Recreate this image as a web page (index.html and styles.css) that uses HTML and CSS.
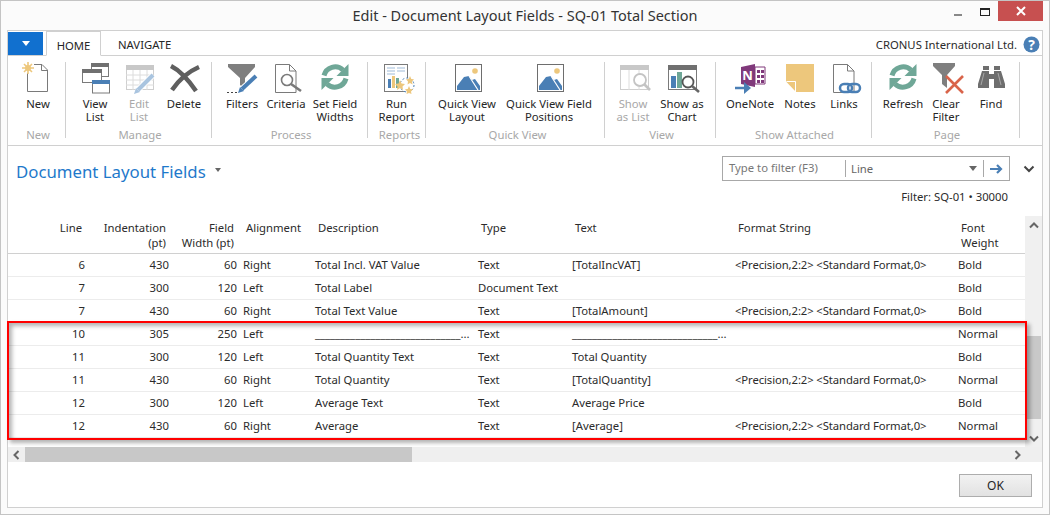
FILE: index.html
```html
<!DOCTYPE html>
<html lang="en">
<head>
<meta charset="UTF-8" />
<title>Edit - Document Layout Fields - SQ-01 Total Section</title>
<link rel="stylesheet" href="styles.css">
</head>
<body>

<svg class="defs" width="0" height="0">
  <symbol id="i-refresh" viewBox="0 0 32 32">
    <path d="M5 13.5A11.5 11.5 0 0 1 24 8" fill="none" stroke="#6fa797" stroke-width="5"/>
    <path d="M29.5 2V14H17.5z" fill="#6fa797"/>
    <path d="M27 16.5A11.5 11.5 0 0 1 8 22" fill="none" stroke="#6fa797" stroke-width="5"/>
    <path d="M2.5 28V16H14.5z" fill="#6fa797"/>
  </symbol>
  <symbol id="i-picture" viewBox="0 0 32 32">
    <rect x="4.5" y="2.5" width="26" height="27" fill="#fff" stroke="#6e6e6e"/>
    <circle cx="24" cy="9" r="2.8" fill="#edc77c"/>
    <path d="M6 28V24L13 15L18 14L21 18L24 17L29 24V28z" fill="#4a7fb5"/>
    <path d="M18 14L27 28" fill="none" stroke="#fff" stroke-width="1.2"/>
  </symbol>
</svg>

<div class="window">
  <div class="titlebar">
    <div></div>
    <div class="title">Edit - Document Layout Fields - SQ-01 Total Section</div>
    <div class="winbtns">
      <span class="win-min"></span>
      <span class="win-max"></span>
      <span class="win-close">
        <svg width="12" height="12" viewBox="0 0 12 12"><path d="M2 2L10 10M10 2L2 10" stroke="#fff" stroke-width="2"/></svg>
      </span>
    </div>
  </div>

  <div class="frame">
    <div class="tabs">
      <div class="filebtn"><span class="filearrow"></span></div>
      <div class="tab active">HOME</div>
      <div class="tab">NAVIGATE</div>
      <div class="company">CRONUS International Ltd.</div>
      <svg class="help" width="17" height="17" viewBox="0 0 17 17">
        <circle cx="8.5" cy="8.5" r="8" fill="#4a7fb5"/>
        <text x="8.5" y="13.5" text-anchor="middle" class="helpmark">?</text>
      </svg>
    </div>

    <div class="ribbon">
      <div class="group g-new">
        <div class="btns">
          <div class="rb w52">
            <svg class="ico" width="32" height="32" viewBox="0 0 32 32">
              <path d="M5.5 11V29.5H25.5V8L20 2.5H12" fill="#fff" stroke="#7a7a7a"/>
              <path d="M19.5 2.5V8.5H25.5" fill="none" stroke="#7a7a7a"/>
              <path d="M6 0V12M0 6H12M2 2L10 10M10 2L2 10" stroke="#edc77c" stroke-width="1.6"/>
              <circle cx="6" cy="6" r="3" fill="#edc77c"/>
            </svg>
            <span>New</span>
          </div>
        </div>
        <div class="glabel">New</div>
      </div>

      <div class="group g-manage">
        <div class="btns">
          <div class="rb w44">
            <svg class="ico" width="32" height="32" viewBox="0 0 32 32">
              <rect x="12.5" y="1.5" width="17" height="13" fill="#fff" stroke="#7a7a7a"/>
              <rect x="12" y="1" width="18" height="4" fill="#707070"/>
              <rect x="3.5" y="7.5" width="19" height="13" fill="#fff" stroke="#7a7a7a"/>
              <rect x="3" y="7" width="20" height="4" fill="#707070"/>
              <rect x="13.5" y="18.5" width="17" height="12.5" fill="#fff" stroke="#7a7a7a"/>
              <rect x="13" y="18" width="18" height="4" fill="#4a7fb5"/>
            </svg>
            <span>View<br>List</span>
          </div>
          <div class="rb w44 off">
            <svg class="ico" width="32" height="32" viewBox="0 0 32 32">
              <rect x="3.5" y="3.5" width="27" height="24" fill="#fff" stroke="#cfcfcf"/>
              <rect x="3" y="3" width="28" height="5" fill="#c8c8c8"/>
              <path d="M3 13H31M3 18H31M3 23H31M10 8V28M17 8V28M24 8V28" stroke="#dcdcdc"/>
              <path d="M14 29L30 13" stroke="#fff" stroke-width="6"/>
              <path d="M15 28L30 13" stroke="#a9c4df" stroke-width="4"/>
              <path d="M11 32L13 26L17 30z" fill="#a9c4df"/>
            </svg>
            <span>Edit<br>List</span>
          </div>
          <div class="rb w46">
            <svg class="ico" width="32" height="32" viewBox="0 0 32 32">
              <path d="M3 4Q15 10 28 29" fill="none" stroke="#5f5f5f" stroke-width="4.5"/>
              <path d="M31 5Q15 12 4 28" fill="none" stroke="#5f5f5f" stroke-width="4.5"/>
            </svg>
            <span>Delete</span>
          </div>
        </div>
        <div class="glabel">Manage</div>
      </div>

      <div class="group g-process">
        <div class="btns">
          <div class="rb w44">
            <svg class="ico" width="32" height="32" viewBox="0 0 32 32">
              <path d="M2 2H29V5L19 16V27L14 23V16L2 5z" fill="#7f7f7f"/>
              <path d="M15 28L30 14" stroke="#fff" stroke-width="6"/>
              <path d="M16 27L30 14" stroke="#4a7fb5" stroke-width="4"/>
              <path d="M12 31L14 25L18 29z" fill="#4a7fb5"/>
              <path d="M1 30.5H12" stroke="#444" stroke-dasharray="2 2"/>
            </svg>
            <span>Filters</span>
          </div>
          <div class="rb w44">
            <svg class="ico" width="32" height="32" viewBox="0 0 32 32">
              <path d="M5.5 2.5V30.5H26V9L19.5 2.5z" fill="#fff" stroke="#7a7a7a"/>
              <path d="M19.5 2.5V9H26" fill="none" stroke="#7a7a7a"/>
              <circle cx="17" cy="18" r="5.5" fill="#fff" stroke="#7a7a7a" stroke-width="1.6"/>
              <path d="M21 22L31 29" stroke="#7a7a7a" stroke-width="2.6"/>
            </svg>
            <span>Criteria</span>
          </div>
          <div class="rb w54">
            <svg class="ico" width="32" height="32"><use href="#i-refresh"/></svg>
            <span>Set Field<br>Widths</span>
          </div>
        </div>
        <div class="glabel">Process</div>
      </div>

      <div class="group g-reports">
        <div class="btns">
          <div class="rb w57">
            <svg class="ico" width="32" height="32" viewBox="0 0 32 32">
              <rect x="3.5" y="2.5" width="23" height="27" fill="#fff" stroke="#7a7a7a"/>
              <path d="M6 6H14M16 6H24M6 9H14M16 9H24M6 12H14" stroke="#9fbbd8"/>
              <rect x="7" y="17" width="3" height="9" fill="#4a7fb5"/>
              <rect x="11" y="14" width="3" height="12" fill="#edc77c"/>
              <rect x="15" y="16" width="3" height="10" fill="#6fa797"/>
              <circle cx="26" cy="23" r="7" fill="#fff" stroke="#4a7fb5" stroke-dasharray="2 2"/>
              <path d="M19 18L20.500 21.500L24 22L21.500 24.500L22 28L19 26L16 28L16.500 24.500L14 22L17.500 21.500z" fill="#edc77c"/>
              <path d="M29 14L30.300 17L33 17.300L31 19.500L31.500 22.500L29 21L26.500 22.500L27 19.500L25 17.300L27.700 17z" fill="#edc77c"/>
              <path d="M28 24L29.300 27L32 27.300L30 29.500L30.500 32L28 31L25.500 32L26 29.500L24 27.300L26.700 27z" fill="#edc77c"/>
            </svg>
            <span>Run<br>Report</span>
          </div>
        </div>
        <div class="glabel">Reports</div>
      </div>

      <div class="group g-quick">
        <div class="btns">
          <div class="rb w62">
            <svg class="ico" width="32" height="32"><use href="#i-picture"/></svg>
            <span>Quick View<br>Layout</span>
          </div>
          <div class="rb w102">
            <svg class="ico" width="32" height="32"><use href="#i-picture"/></svg>
            <span>Quick View Field<br>Positions</span>
          </div>
        </div>
        <div class="glabel">Quick View</div>
      </div>

      <div class="group g-view">
        <div class="btns">
          <div class="rb w44 off">
            <svg class="ico" width="32" height="32" viewBox="0 0 32 32">
              <rect x="3.500" y="3.500" width="28" height="24" fill="#fff" stroke="#cfcfcf"/>
              <rect x="3" y="3" width="29" height="5" fill="#c8c8c8"/>
              <path d="M12 8V28M22 8V28" stroke="#dcdcdc"/>
              <circle cx="23" cy="18" r="6" fill="#fff" stroke="#c4c4c4" stroke-width="1.8"/>
              <path d="M27 22L33 28" stroke="#c4c4c4" stroke-width="2.6"/>
            </svg>
            <span>Show<br>as List</span>
          </div>
          <div class="rb w54">
            <svg class="ico" width="32" height="32" viewBox="0 0 32 32">
              <rect x="2.500" y="3.500" width="28" height="24" fill="#fff" stroke="#7a7a7a"/>
              <rect x="2" y="3" width="29" height="5" fill="#707070"/>
              <rect x="5" y="14" width="5" height="12" fill="#4a7fb5"/>
              <rect x="11" y="10" width="5" height="16" fill="#6fa797"/>
              <circle cx="22" cy="20" r="5.500" fill="#fff" stroke="#555" stroke-width="1.800"/>
              <path d="M26 24L33 30" stroke="#666" stroke-width="2.600"/>
            </svg>
            <span>Show as<br>Chart</span>
          </div>
        </div>
        <div class="glabel">View</div>
      </div>

      <div class="group g-attached">
        <div class="btns">
          <div class="rb w56">
            <svg class="ico" width="32" height="32" viewBox="0 0 32 32">
              <path d="M7 5L21 2V25L7 22z" fill="#80397b"/>
              <path d="M21 5H31V22H21z" fill="#fff" stroke="#80397b"/>
              <path d="M23 8H26V11H23zM23 13H26V16H23zM23 18H26V21H23zM27 8H30V11H27zM27 13H30V16H27zM27 18H30V21H27z" fill="#80397b"/>
              <text x="13.500" y="18" text-anchor="middle" class="onenote-n">N</text>
              <path d="M1 26H13" stroke="#4a7fb5" stroke-width="2.500"/>
              <path d="M10 20L17 26L10 32z" fill="#4a7fb5"/>
            </svg>
            <span>OneNote</span>
          </div>
          <div class="rb w44">
            <svg class="ico" width="32" height="32" viewBox="0 0 32 32">
              <rect x="2" y="2" width="28" height="28" fill="#edc77c"/>
              <path d="M2 19.500H12V30H2z" fill="#fff"/>
              <path d="M2 19.500L12 19.500V30z" fill="#edc77c"/>
              <path d="M2.500 19.500H11.500V30" fill="none" stroke="#fff"/>
            </svg>
            <span>Notes</span>
          </div>
          <div class="rb w44">
            <svg class="ico" width="32" height="32" viewBox="0 0 32 32">
              <path d="M5.500 2.500V30.500H26V9L19.500 2.500z" fill="#fff" stroke="#7a7a7a"/>
              <path d="M19.500 2.500V9H26" fill="none" stroke="#7a7a7a"/>
              <rect x="12" y="22" width="12" height="8" rx="4" fill="none" stroke="#4a7fb5" stroke-width="2.500"/>
              <rect x="20" y="22" width="12" height="8" rx="4" fill="none" stroke="#4a7fb5" stroke-width="2.500"/>
            </svg>
            <span>Links</span>
          </div>
        </div>
        <div class="glabel">Show Attached</div>
      </div>

      <div class="group g-page">
        <div class="btns">
          <div class="rb w50">
            <svg class="ico" width="32" height="32"><use href="#i-refresh"/></svg>
            <span>Refresh</span>
          </div>
          <div class="rb w36">
            <svg class="ico" width="32" height="32" viewBox="0 0 32 32">
              <path d="M3 1H25V4L17 13V26L12 22V13L3 4z" fill="#7f7f7f"/>
              <path d="M16 14L33 31M33 14L16 31" stroke="#d9644a" stroke-width="2.600"/>
            </svg>
            <span>Clear<br>Filter</span>
          </div>
          <div class="rb w54">
            <svg class="ico" width="32" height="32" viewBox="0 0 32 32">
              <path d="M8 4H14V8H8zM19 4H25V8H19z" fill="#6e6e6e"/>
              <path d="M7 9H14V12H19V9H26L30 22V26H19V17H14V26H3V22z" fill="#6e6e6e"/>
              <path d="M9 11L6 23M23 11L26 23" stroke="#a8a8a8"/>
            </svg>
            <span>Find</span>
          </div>
        </div>
        <div class="glabel">Page</div>
      </div>
    </div>

    <div class="pagehead">
      <h1 class="pagetitle">Document Layout Fields</h1>
      <span class="titlearrow"></span>
      <div class="filterbox">
        <div class="f-input">Type to filter (F3)</div>
        <div class="f-field">Line<span class="f-drop"></span></div>
        <div class="f-go">
          <svg width="14" height="10" viewBox="0 0 14 10"><path d="M0 5H10M7 1L11 5L7 9" fill="none" stroke="#4a7fb5" stroke-width="2.200"/></svg>
        </div>
      </div>
      <svg class="chevron" width="12" height="8" viewBox="0 0 12 8"><path d="M1.500 1.500L6 6L10.500 1.500" fill="none" stroke="#444" stroke-width="2"/></svg>
    </div>
    <div class="filterinfo">Filter: SQ-01 • 30000</div>

    <div class="gridwrap">
      <table class="grid">
        <colgroup>
          <col class="c-line"><col class="c-ind"><col class="c-width"><col class="c-align"><col class="c-desc"><col class="c-type"><col class="c-text"><col class="c-format"><col class="c-weight">
        </colgroup>
        <thead>
          <tr>
            <th class="num">Line</th>
            <th class="num">Indentation<br>(pt)</th>
            <th class="num">Field<br>Width (pt)</th>
            <th>Alignment</th>
            <th>Description</th>
            <th>Type</th>
            <th>Text</th>
            <th>Format String</th>
            <th>Font<br>Weight</th>
          </tr>
        </thead>
        <tbody>
          <tr><td class="num">6</td><td class="num">430</td><td class="num">60</td><td>Right</td><td>Total Incl. VAT Value</td><td>Text</td><td>[TotalIncVAT]</td><td class="fmt">&lt;Precision,2:2&gt; &lt;Standard Format,0&gt;</td><td>Bold</td></tr>
          <tr><td class="num">7</td><td class="num">300</td><td class="num">120</td><td>Left</td><td>Total Label</td><td>Document Text</td><td></td><td></td><td>Bold</td></tr>
          <tr><td class="num">7</td><td class="num">430</td><td class="num">60</td><td>Right</td><td>Total Text Value</td><td>Text</td><td>[TotalAmount]</td><td class="fmt">&lt;Precision,2:2&gt; &lt;Standard Format,0&gt;</td><td>Bold</td></tr>
          <tr><td class="num">10</td><td class="num">305</td><td class="num">250</td><td>Left</td><td>_____________________________...</td><td>Text</td><td>_____________________________...</td><td></td><td>Normal</td></tr>
          <tr><td class="num">11</td><td class="num">300</td><td class="num">120</td><td>Left</td><td>Total Quantity Text</td><td>Text</td><td>Total Quantity</td><td></td><td>Bold</td></tr>
          <tr><td class="num">11</td><td class="num">430</td><td class="num">60</td><td>Right</td><td>Total Quantity</td><td>Text</td><td>[TotalQuantity]</td><td class="fmt">&lt;Precision,2:2&gt; &lt;Standard Format,0&gt;</td><td>Normal</td></tr>
          <tr><td class="num">12</td><td class="num">300</td><td class="num">120</td><td>Left</td><td>Average Text</td><td>Text</td><td>Average Price</td><td></td><td>Bold</td></tr>
          <tr><td class="num">12</td><td class="num">430</td><td class="num">60</td><td>Right</td><td>Average</td><td>Text</td><td>[Average]</td><td class="fmt">&lt;Precision,2:2&gt; &lt;Standard Format,0&gt;</td><td>Normal</td></tr>
        </tbody>
      </table>
      <div class="vscroll">
        <svg class="sb-up" width="10" height="7" viewBox="0 0 10 7"><path d="M1 5.500L5 1.500L9 5.500" fill="none" stroke="#666" stroke-width="2"/></svg>
        <div class="vthumb"></div>
        <svg class="sb-down" width="10" height="7" viewBox="0 0 10 7"><path d="M1 1.500L5 5.500L9 1.500" fill="none" stroke="#666" stroke-width="2"/></svg>
      </div>
      <div class="redbox"></div>
    </div>

    <div class="hscroll">
      <svg class="sb-left" width="7" height="10" viewBox="0 0 7 10"><path d="M5.500 1L1.500 5L5.500 9" fill="none" stroke="#666" stroke-width="2"/></svg>
      <div class="hthumb"></div>
      <svg class="sb-right" width="7" height="10" viewBox="0 0 7 10"><path d="M1.500 1L5.500 5L1.500 9" fill="none" stroke="#666" stroke-width="2"/></svg>
    </div>

    <div class="footer">
      <button class="okbtn">OK</button>
    </div>
  </div>
</div>

</body>
</html>
```

FILE: styles.css
```css
* {
  box-sizing: border-box;
}
body {
  margin: 0;
  font-family: "Noto Sans", "Open Sans", sans-serif;
  font-size: 11.3px;
  color: #2b2b2b;
  background: #fff;
}
.defs {
  position: absolute;
}
.window {
  width: 1050px;
  height: 515px;
  display: flex;
  flex-direction: column;
  background: #fbfbfb;
  border: 1px solid #c4c4c4;
  padding: 0 6px 6px 6px;
}

/* title bar */
.titlebar {
  height: 29px;
  flex: none;
  display: grid;
  grid-template-columns: 1fr auto 1fr;
  align-items: start;
}
.title {
  font-size: 14.5px;
  line-height: 29px;
  color: #333;
}
.winbtns {
  display: flex;
  justify-content: flex-end;
  align-items: flex-start;
}
.win-min {
  width: 8px;
  height: 2px;
  background: #888;
  margin-top: 13px;
  margin-right: 18px;
}
.win-max {
  width: 10px;
  height: 8px;
  margin-top: 7px;
  margin-right: 8px;
  border: 1px solid #222;
  border-top-width: 2px;
}
.win-close {
  width: 45px;
  height: 20px;
  background: #c75050;
  display: flex;
  align-items: center;
  justify-content: center;
}

.frame {
  flex: 1;
  display: flex;
  flex-direction: column;
  background: #fff;
  border: 1px solid #d0d0d0;
}

/* tabs */
.tabs {
  height: 25px;
  flex: none;
  display: flex;
  align-items: flex-end;
  border-bottom: 1px solid #d0d0d0;
  padding-right: 2px;
}
.filebtn {
  width: 35px;
  height: 23px;
  background: #1170cf;
  display: flex;
  align-items: center;
  justify-content: center;
}
.filearrow {
  width: 0;
  height: 0;
  border-left: 4px solid transparent;
  border-right: 4px solid transparent;
  border-top: 5px solid #fff;
}
.tab {
  height: 24px;
  line-height: 27px;
  padding: 0 11px;
  margin-left: 3px;
  color: #262626;
}
.tab.active {
  width: 55px;
  text-align: center;
  padding: 0;
  border: 1px solid #d0d0d0;
  border-bottom: 1px solid #fff;
  margin-bottom: -1px;
  height: 25px;
}
.tab + .tab {
  margin-left: 6px;
}
.company {
  margin-left: auto;
  height: 24px;
  line-height: 27px;
}
.help {
  margin: 0 0 2px 6px;
}
.helpmark {
  font-family: "Open Sans", sans-serif;
  font-size: 14px;
  font-weight: 700;
  fill: #fff;
}

/* ribbon */
.ribbon {
  height: 90px;
  flex: none;
  display: flex;
  align-items: flex-start;
  padding-top: 6px;
  border-bottom: 1px solid #d0d0d0;
}
.group {
  height: 76px;
  display: flex;
  flex-direction: column;
  border-right: 1px solid #d0d0d0;
}
.g-new { width: 58px; padding-left: 4px; }
.g-manage { width: 146px; padding-left: 7px; }
.g-process { width: 156px; padding-left: 8px; }
.g-reports { width: 58px; }
.g-quick { width: 179px; padding-left: 10px; }
.g-view { width: 111px; padding-left: 6px; }
.g-attached { width: 156px; padding-left: 6px; }
.g-page { width: 148px; padding-left: 6px; }
.btns {
  display: flex;
}
.rb {
  display: flex;
  flex-direction: column;
  align-items: center;
  text-align: center;
  line-height: 13px;
  color: #262626;
  white-space: nowrap;
}
.rb .ico {
  flex: none;
  overflow: visible;
  margin-bottom: 3px;
}
.rb.off {
  color: #a8a8a8;
}
.w36 { width: 36px; }
.w44 { width: 44px; }
.w46 { width: 46px; }
.w50 { width: 50px; }
.w52 { width: 52px; }
.w54 { width: 54px; }
.w56 { width: 56px; }
.w57 { width: 57px; }
.w62 { width: 62px; }
.w102 { width: 102px; }
.glabel {
  margin-top: auto;
  margin-bottom: -3px;
  line-height: 13px;
  text-align: center;
  color: #a8a8a8;
}
.g-new .glabel { margin-left: -4px; padding-left: 3px; }
.g-manage .glabel { margin-left: -7px; padding-left: 3px; }
.g-process .glabel { margin-left: -8px; padding-left: 3px; }
.g-reports .glabel { padding-left: 6px; }
.g-quick .glabel { margin-left: -10px; padding-left: 5px; }
.g-view .glabel { margin-left: -6px; padding-left: 3px; }
.g-attached .glabel { margin-left: -6px; padding-left: 2px; }
.g-page .glabel { margin-left: -6px; padding-left: 3px; }

/* page header */
.pagehead {
  height: 45px;
  flex: none;
  display: flex;
  align-items: center;
  padding: 0 7px 0 8px;
}
.pagetitle {
  margin: 5px 0 0 0;
  font-size: 16.8px;
  font-weight: 400;
  color: #1e79cb;
}
.titlearrow {
  width: 0;
  height: 0;
  margin: 2px 0 0 9px;
  border-left: 3px solid transparent;
  border-right: 3px solid transparent;
  border-top: 4px solid #666;
}
.filterbox {
  margin-left: auto;
  width: 288px;
  height: 25px;
  display: flex;
  align-items: center;
  border: 1px solid #a8a8a8;
}
.f-input {
  width: 123px;
  height: 17px;
  line-height: 16px;
  padding-left: 6px;
  color: #777;
  border-right: 1px solid #a8a8a8;
}
.f-field {
  flex: 1;
  height: 17px;
  line-height: 17px;
  padding: 0 0 0 5px;
  color: #666;
  border-right: 1px solid #a8a8a8;
  display: flex;
  align-items: center;
  justify-content: space-between;
}
.f-drop {
  width: 0;
  height: 0;
  margin-right: 6px;
  border-left: 4px solid transparent;
  border-right: 4px solid transparent;
  border-top: 5px solid #666;
}
.f-go {
  width: 25px;
  display: flex;
  justify-content: center;
}
.chevron {
  margin: 0 0 0 13px;
}
.filterinfo {
  height: 25px;
  flex: none;
  line-height: 12px;
  padding: 0 34px 0 0;
  text-align: right;
}

/* grid */
.gridwrap {
  position: relative;
  height: 231px;
  flex: none;
  display: flex;
}
.grid {
  width: 1017px;
  flex: none;
  align-self: flex-start;
  table-layout: fixed;
  border-collapse: separate;
  border-spacing: 0;
}
.c-line { width: 80px; }
.c-ind { width: 84px; }
.c-width { width: 68px; }
.c-align { width: 72px; }
.c-desc { width: 163px; }
.c-type { width: 94px; }
.c-text { width: 163px; }
.c-format { width: 223px; }
.c-weight { width: 70px; }
.grid th {
  height: 38px;
  padding: 4px 6px 0 6px;
  vertical-align: top;
  text-align: left;
  font-weight: 400;
  line-height: 15px;
  border-bottom: 1px solid #d0d0d0;
}
.grid td {
  height: 23px;
  padding: 0 3px 2px 3px;
  white-space: nowrap;
  border-bottom: 1px solid #ececec;
}
.grid .num {
  text-align: right;
}
.grid .fmt {
  letter-spacing: -0.1px;
}
.vscroll {
  flex: 1;
  display: flex;
  flex-direction: column;
  align-items: center;
  background: #f0f0f0;
}
.sb-up {
  margin-top: 6px;
  flex: none;
}
.vthumb {
  width: 14px;
  height: 83px;
  flex: none;
  margin-top: 107px;
  background: #c8c8c8;
}
.sb-down {
  margin-top: 16px;
  flex: none;
}
.redbox {
  position: absolute;
  left: -1px;
  top: 105px;
  width: 1020px;
  height: 119px;
  border: 2px solid #f00;
  box-shadow: 3px 3px 4px rgba(0,0,0,0.3), inset 3px 3px 4px rgba(0,0,0,0.3);
}
.hscroll {
  height: 15px;
  flex: none;
  display: flex;
  align-items: center;
  background: #efefef;
}
.sb-left {
  margin: 0 5px 0 5px;
  flex: none;
}
.hthumb {
  width: 387px;
  height: 15px;
  flex: none;
  background: #c8c8c8;
}
.sb-right {
  margin-left: 602px;
  flex: none;
}

/* footer */
.footer {
  flex: 1;
  display: flex;
  justify-content: flex-end;
  align-items: flex-start;
  padding: 12px 10px 0 0;
}
.okbtn {
  width: 73px;
  height: 23px;
  padding: 0;
  font-family: inherit;
  font-size: 12px;
  color: #262626;
  background: linear-gradient(to bottom, #f2f2f2, #e2e2e2);
  border: 1px solid #adadad;
}
.onenote-n {
  font-family: "Open Sans", sans-serif;
  font-size: 13px;
  font-weight: 700;
  fill: #fff;
}
```
